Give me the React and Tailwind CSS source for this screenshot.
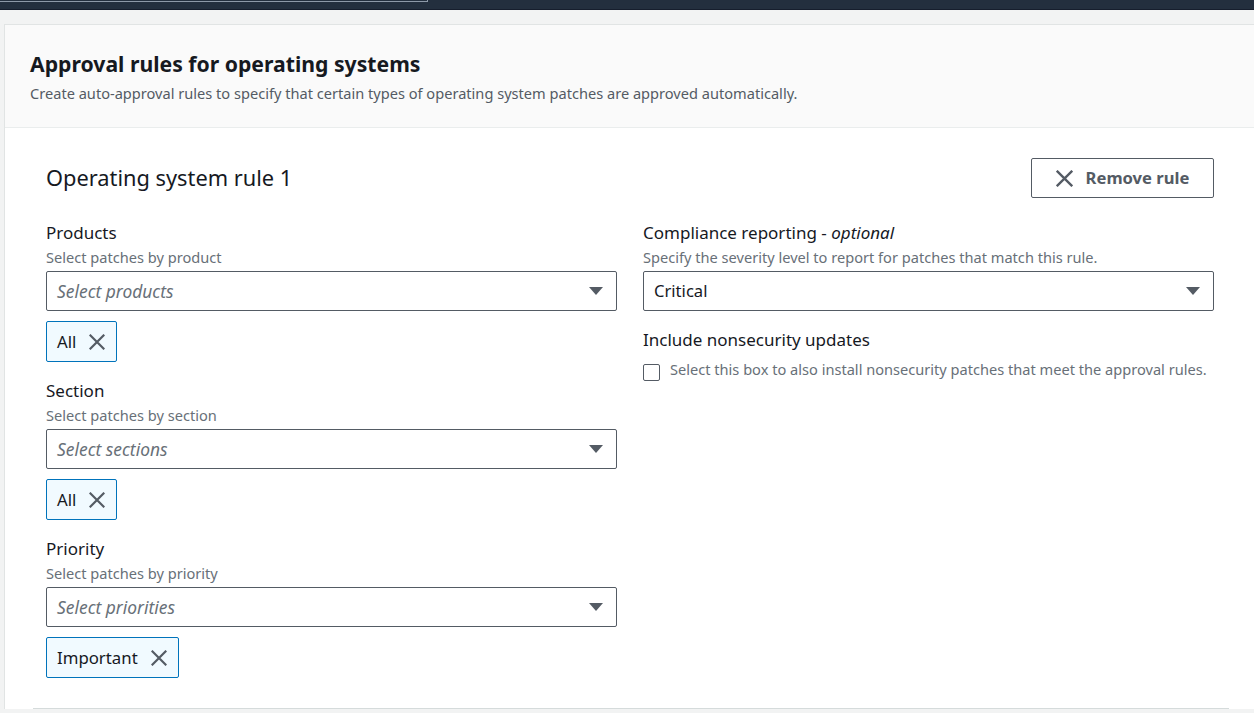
const font = { fontFamily: '"Noto Sans", "Open Sans", Arial, sans-serif' };

const XIcon = ({ size = 16 }) => (
  <svg width={size} height={size} viewBox="0 0 16 16" className="shrink-0">
    <path d="M1.5 1.5 L14.5 14.5 M14.5 1.5 L1.5 14.5" stroke="#545b64" strokeWidth="2.2" strokeLinecap="square" fill="none" />
  </svg>
);

const Caret = () => (
  <svg width="16" height="10" viewBox="0 0 16 10" className="shrink-0">
    <polygon points="1,1 15,1 8,9" fill="#545b64" />
  </svg>
);

const SelectBox = ({ placeholder, value }) => (
  <div className="flex h-10 items-center justify-between rounded-[2px] border border-[#545b64] bg-white pl-[10px] pr-[12px]">
    {value ? (
      <span className="text-[16.6px] text-[#16191f]">{value}</span>
    ) : (
      <span className="text-[17.4px] italic text-[#687078]">{placeholder}</span>
    )}
    <Caret />
  </div>
);

const Token = ({ label }) => (
  <div className="mt-[10px] flex h-[41px] w-fit items-center gap-[13px] rounded-[2px] border border-[#0073bb] bg-[#f1faff] pl-[10px] pr-[11px]">
    <span className="text-[16.8px] text-[#16191f]">{label}</span>
    <XIcon />
  </div>
);

const Field = ({ label, optional, description, children, className = '' }) => (
  <div className={className}>
    <div className="text-[17px] leading-[22px] text-[#16191f]">
      {label}
      {optional && (
        <>
          {' - '}
          <i>optional</i>
        </>
      )}
    </div>
    {description && (
      <div className="mt-[3px] text-[14.6px] leading-[20px] text-[#687078]">{description}</div>
    )}
    <div className="mt-[4px]">{children}</div>
  </div>
);

export default function App() {
  return (
    <div className="min-h-[713px] overflow-hidden bg-[#f2f3f3]" style={font}>
      {/* top nav strip */}
      <div className="h-[10px] border-b border-[#161e2d] bg-[#232f3e]">
        <div className="h-[2px] w-[428px] border-b border-r border-[#8d99a8] bg-[#232f3e]" />
      </div>

      <div className="ml-[4px] mt-[14px] border-l border-t border-[#e1e4e4] bg-white">
        {/* panel header */}
        <div className="border-b border-[#eaeded] bg-[#fafafa] pb-[24px] pl-[25px] pt-[25px]">
          <h2 className="text-[21.2px] font-bold leading-[28px] text-[#16191f]">
            Approval rules for operating systems
          </h2>
          <p className="mt-[5px] text-[14.6px] leading-[20px] text-[#545b64]">
            Create auto-approval rules to specify that certain types of operating system patches are approved automatically.
          </p>
        </div>

        {/* rule */}
        <div className="pl-[41px] pr-[40px] pt-[30px]">
          <div className="flex items-center justify-between">
            <h3 className="text-[21.8px] leading-[40px] text-[#16191f]">Operating system rule 1</h3>
            <button className="flex h-10 w-[183px] items-center justify-center gap-[13px] rounded-[2px] border border-[#545b64] bg-white text-[16.6px] font-bold text-[#545b64]">
              <XIcon size={17} />
              Remove rule
            </button>
          </div>

          <div className="mt-[24px] grid grid-cols-2 gap-[26px]">
            <div>
              <Field label="Products" description="Select patches by product">
                <SelectBox placeholder="Select products" />
                <Token label="All" />
              </Field>
              <Field label="Section" description="Select patches by section" className="mt-[18px]">
                <SelectBox placeholder="Select sections" />
                <Token label="All" />
              </Field>
              <Field label="Priority" description="Select patches by priority" className="mt-[18px]">
                <SelectBox placeholder="Select priorities" />
                <Token label="Important" />
              </Field>
            </div>

            <div>
              <Field
                label="Compliance reporting"
                optional
                description="Specify the severity level to report for patches that match this rule."
              >
                <SelectBox value="Critical" />
              </Field>
              <div className="mt-[18px] text-[17px] leading-[22px] text-[#16191f]">
                Include nonsecurity updates
              </div>
              <label className="mt-[8px] flex items-start gap-[10px]">
                <span className="mt-[5px] h-[17px] w-[17px] shrink-0 rounded-[2px] border border-[#545b64] bg-white" />
                <span className="text-[14.6px] leading-[20px] text-[#687078]">
                  Select this box to also install nonsecurity patches that meet the approval rules.
                </span>
              </label>
            </div>
          </div>

          <div className="mr-[-15px] ml-[-13px] mt-[30px] border-t border-[#d5dbdb]" />
        </div>
      </div>
    </div>
  );
}
